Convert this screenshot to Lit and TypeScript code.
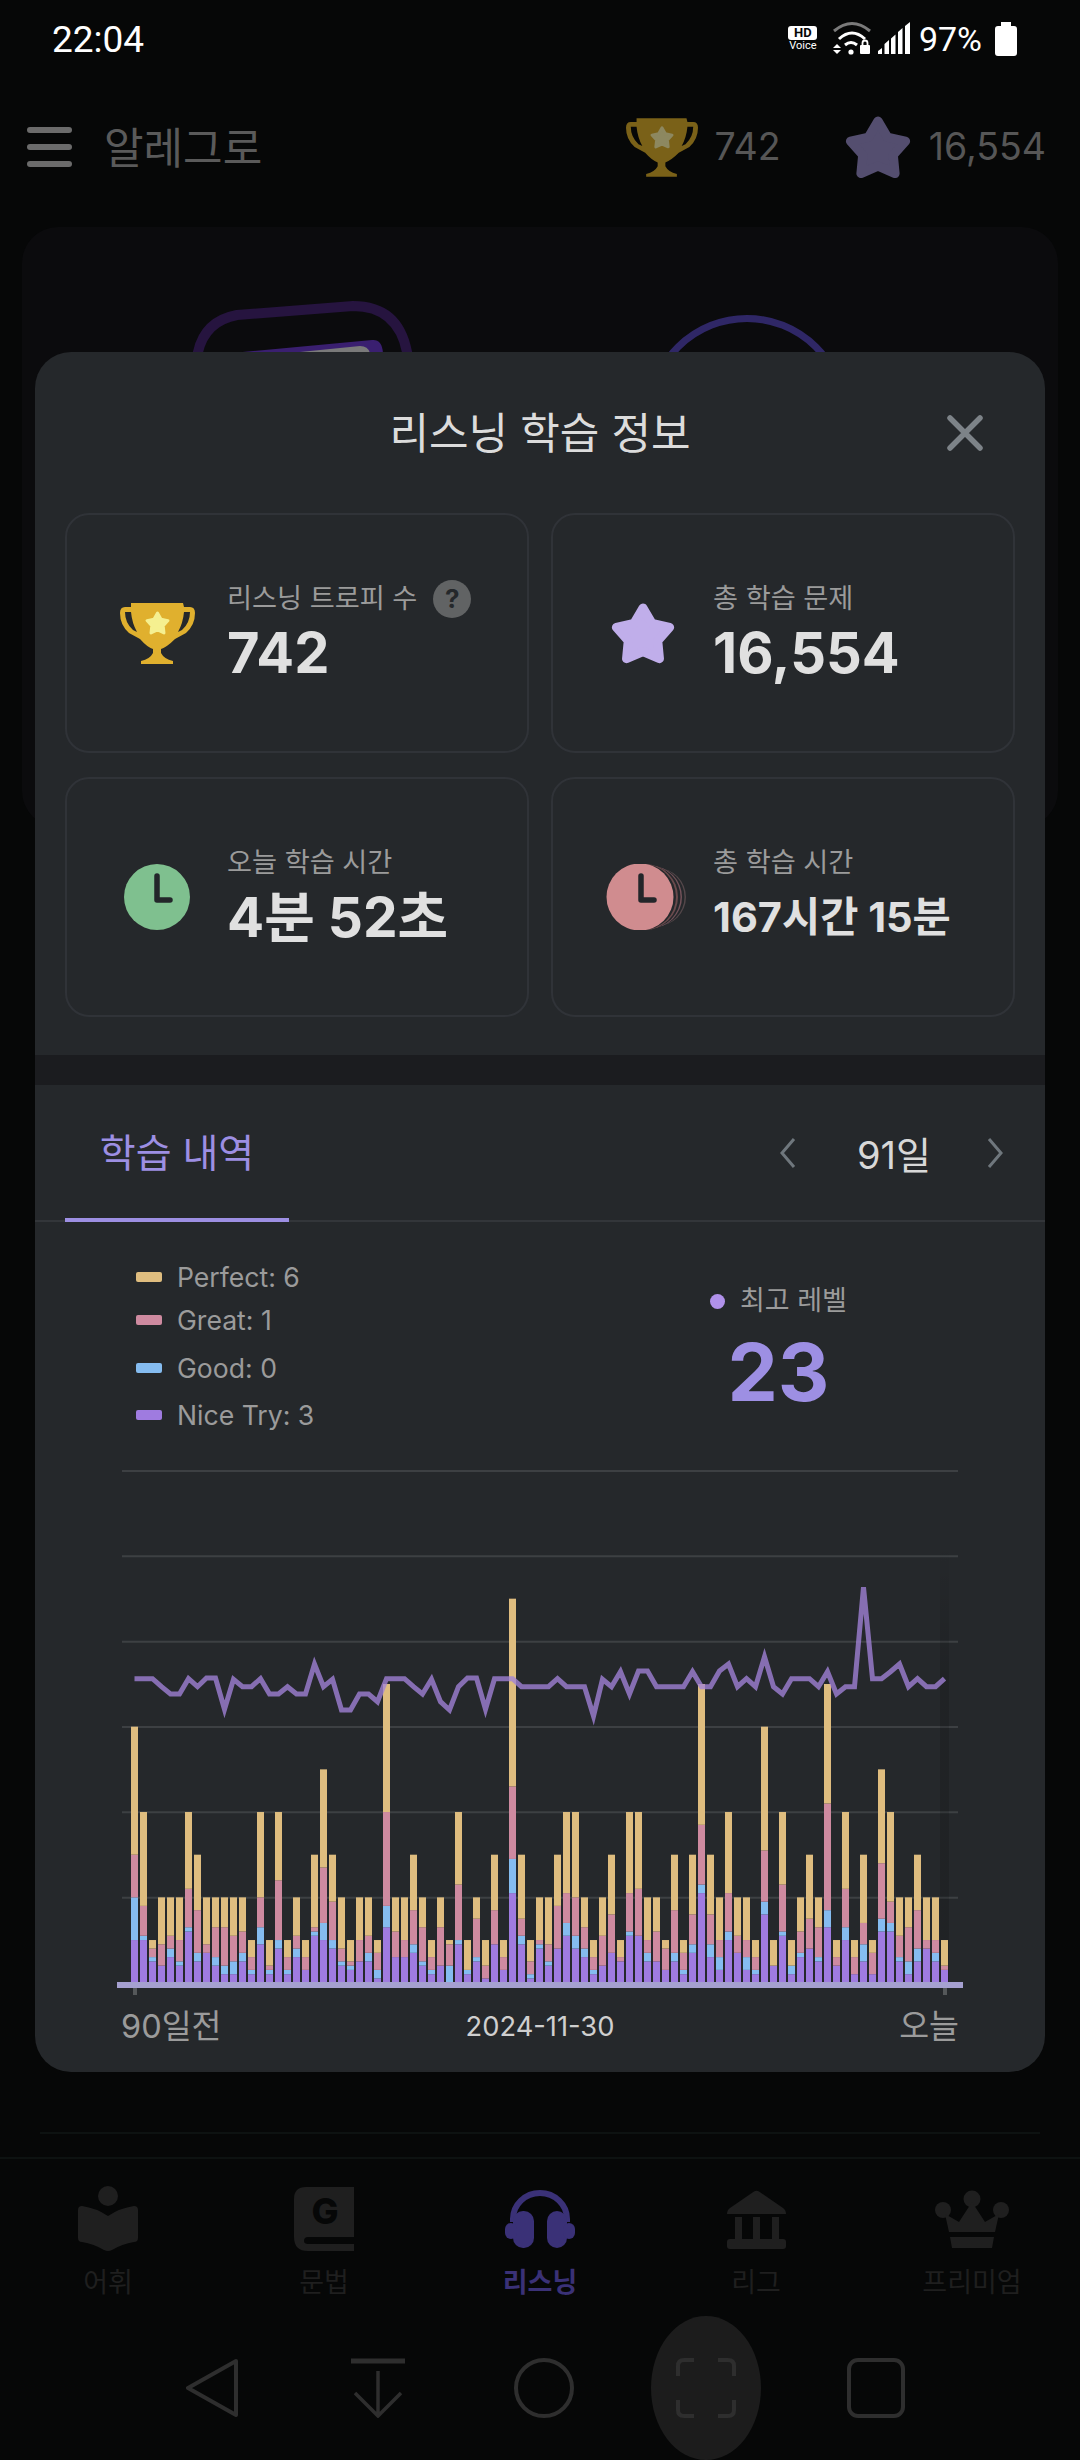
import { LitElement, html, css, svg } from "lit";
import { customElement } from "lit/decorators.js";

// Cumulative question counts per day: nice try, good, great, perfect.
const DAYS: number[][] = [
  [10,20,30,60],[10,11,18,40],[5,6,8,10],[4,4,9,20],[6,8,11,20],[4,5,10,20],[12,13,22,40],[5,7,17,30],[7,7,9,20],[4,6,13,20],
  [2,4,13,20],[2,5,11,20],[5,7,12,20],[2,3,6,10],[9,13,20,40],[2,3,4,10],[8,10,24,40],[2,3,6,10],[6,8,11,20],[3,3,6,10],
  [11,12,13,30],[10,14,27,50],[8,10,19,30],[4,5,8,20],[3,4,5,10],[5,5,10,20],[5,7,11,20],[1,3,7,10],[13,18,40,70],[6,6,12,20],
  [6,6,10,20],[7,9,17,30],[4,5,13,20],[2,3,6,10],[4,4,13,20],[0,4,9,10],[9,10,23,40],[2,3,3,10],[5,6,15,20],[1,1,4,10],
  [9,9,17,30],[3,3,6,10],[21,29,46,90],[9,11,15,30],[1,2,5,10],[8,9,10,20],[4,5,9,20],[8,8,18,30],[11,14,21,40],[8,11,20,40],
  [6,8,13,20],[2,3,6,10],[4,4,11,20],[7,7,16,30],[5,5,6,10],[11,12,21,40],[11,11,22,40],[5,7,10,20],[5,5,12,20],[3,3,8,10],
  [5,7,17,30],[2,3,7,10],[7,9,16,30],[21,23,37,70],[6,9,16,30],[3,6,10,20],[10,12,21,40],[7,7,11,20],[3,6,10,20],[2,3,6,10],
  [16,19,31,60],[4,4,4,10],[11,12,23,40],[2,4,4,10],[6,7,12,20],[8,8,15,30],[5,6,13,20],[13,17,42,70],[4,4,6,10],[10,13,22,40],
  [2,2,6,10],[5,9,14,30],[2,2,7,10],[12,15,28,50],[12,14,19,40],[5,6,11,20],[2,5,13,20],[5,8,17,30],[8,8,10,20],[5,7,10,20],[3,3,4,10],
];

// Daily top level, stored as the y offset of each point from the top of the plot window.
const LEVELS: number[] = [
  356,356,356,380,402,402,356,380,354,354,448,358,380,380,356,402,402,380,402,402,312,380,358,450,450,402,402,425,356,356,
  356,380,402,358,425,450,380,354,354,448,356,356,356,380,380,380,380,356,380,380,380,468,358,380,335,402,333,333,380,380,
  380,380,335,380,380,333,312,380,356,380,290,380,402,356,356,356,380,335,402,380,380,82,356,356,335,312,380,356,380,380,356,
];

const SERIES = ["#9f7be0", "#85bcf0", "#ce8aa0", "#dfbd7f"];
const BASE = 1982.7;
const UNIT = 4.267;
const GRID = [1471, 1556.3, 1641.7, 1727, 1812.3, 1897.7];

function starPoints(cx: number, cy: number, R: number, r: number): string {
  const pts: string[] = [];
  for (let i = 0; i < 10; i++) {
    const rad = i % 2 === 0 ? R : r;
    const a = -Math.PI / 2 + (i * Math.PI) / 5;
    pts.push(`${(cx + rad * Math.cos(a)).toFixed(2)},${(cy + rad * Math.sin(a)).toFixed(2)}`);
  }
  return pts.join(" ");
}

const trophy = (cup: string, star: string) => html`<svg viewBox="0 0 75 61" width="75" height="61">
  <path fill=${cup} fill-rule="evenodd" d="M11 0H63L64 4H70Q75 4 75 10Q75 22 66 30L55 36Q47 44 41 46V50Q44 56 53 58V61H21V58Q30 56 33 50V46Q27 44 20 36L9 30Q0 22 0 10Q0 4 5 4H11ZM5 9Q5 20 13 27L17 29Q12 20 11 9ZM70 9Q70 20 62 27L58 29Q63 20 64 9Z"/>
  <polygon points=${starPoints(37.5, 21, 11, 6)} fill=${star} stroke=${star} stroke-width="3" stroke-linejoin="round"/>
</svg>`;

const roundStar = (fill: string) => html`<svg viewBox="0 0 64 62" width="64" height="62">
  <polygon points=${starPoints(32, 34, 28, 15.5)} fill=${fill} stroke=${fill} stroke-width="9" stroke-linejoin="round"/>
</svg>`;

const clockHands = (cx: number, cy: number) => svg`<path d="M${cx} ${cy - 21}V${cy + 3}H${cx + 13}" fill="none" stroke="#23262a" stroke-width="5.5" stroke-linejoin="round" stroke-linecap="round"/>`;

@customElement("app-root")
export class AppRoot extends LitElement {
  static styles = css`
    :host {
      display: flex;
      flex-direction: column;
      position: relative;
      width: 1080px;
      height: 2460px;
      overflow: hidden;
      background: #060707;
      font-family: Inter, "Noto Sans CJK KR", sans-serif;
      color: #fff;
    }
    svg { display: block; }

    .status { display: flex; align-items: center; height: 78px; padding: 0 63px 0 52px; flex: none; }
    .clock { font: 400 37px Roboto, sans-serif; }
    .status-right { margin-left: auto; display: flex; align-items: center; }
    .hd { width: 30px; margin-right: 15px; display: flex; flex-direction: column; align-items: center; }
    .hd b { display: block; width: 29px; height: 14px; border-radius: 3px; background: #fff; color: #060707; font: 700 13px/14px Roboto, sans-serif; text-align: center; }
    .hd span { font: 400 11px/12px Roboto, sans-serif; }
    .wifi { width: 40px; height: 36px; margin-right: 4px; }
    .signal { width: 34px; height: 36px; margin-right: 8px; }
    .pct { font: 400 34px Roboto, sans-serif; margin-right: 13px; }
    .battery { width: 22px; height: 34px; }

    .top { display: flex; align-items: center; height: 138px; padding: 0 34px 0 27px; flex: none; }
    .burger { display: flex; flex-direction: column; gap: 11px; width: 45px; margin-right: 32px; }
    .burger i { height: 6px; border-radius: 3px; background: #6b6b6b; }
    .brand { font-size: 43px; color: #5a5a5a; margin-bottom: 5px; }
    .top-trophy { width: 72px; height: 59px; margin-left: auto; margin-right: 17px; display: flex; align-items: center; justify-content: center; }
    .top-trophy svg { width: 72px; height: 59px; }
    .top-star { width: 66px; height: 64px; margin-left: 64px; margin-right: 18px; }
    .top-star svg { width: 66px; height: 64px; }
    .count { font-size: 37.5px; color: #565656; margin-bottom: 2px; }

    .back { margin: 11px 22px 0; height: 600px; flex: none; border-radius: 36px; background: #0b0b0d; }

    .foot { margin-top: auto; flex: none; }
    .rule { height: 2px; margin: 0 40px 23px; background: #0d1211; }
    .tabs { display: grid; grid-template-columns: repeat(5, 216px); height: 159px; padding-top: 26px; box-sizing: border-box; border-top: 2px solid #0d1211; }
    .tab { display: flex; flex-direction: column; align-items: center; color: #1f1f1f; font-size: 27px; }
    .tab .ico { height: 68px; margin-bottom: 12px; display: flex; align-items: center; }
    .tab.on { color: #3a3177; font-weight: 700; }
    .tab span { line-height: 36px; }

    .sys { display: flex; align-items: center; height: 144px; padding-left: 186px; }
    .sys svg { flex: none; }
    .pill { width: 110px; height: 144px; border-radius: 55px / 72px; background: #1c1c1c; margin-left: 77px; margin-right: 86px; display: flex; align-items: center; justify-content: center; }

    .modal {
      position: absolute; left: 35px; top: 352px; width: 1010px; height: 1720px;
      border-radius: 36px; background: #25282b; overflow: hidden;
    }
    .head { display: grid; grid-template-columns: 1fr auto 1fr; align-items: center; height: 161px; }
    .head h2 { grid-column: 2; margin: 0 0 6px; font-size: 43px; font-weight: 400; color: #dcdcdc; }
    .close { justify-self: end; margin-right: 62px; width: 36px; height: 36px; }

    .cards { display: grid; grid-template-columns: 464px 464px; grid-auto-rows: 240px; gap: 24px 22px; padding: 0 30px; }
    .card { display: flex; align-items: center; box-sizing: border-box; border: 2px solid #303338; border-radius: 24px; padding-left: 51px; }
    .card .ico { width: 78px; height: 64px; margin-right: 31px; flex: none; display: flex; justify-content: center; align-items: center; }
    .label { display: flex; align-items: center; gap: 16px; font-size: 27.2px; line-height: 40px; color: #9b9b9b; }
    .help { width: 38px; height: 38px; border-radius: 50%; background: #616364; color: #25282b; font: 700 26px/38px Inter, sans-serif; text-align: center; }
    .value { font-size: 56px; font-weight: 700; line-height: 68px; color: #e0e0e0; }
    .value.mid { font-size: 55px; }
    .value.small { font-size: 41.5px; }

    .band { height: 30px; margin-top: 38px; background: #1b1c1f; }
    .hist { display: flex; align-items: stretch; height: 137px; box-sizing: border-box; border-bottom: 2px solid #33363a; }
    .hist-tab { width: 224px; margin-left: 30px; margin-bottom: -2px; box-sizing: border-box; border-bottom: 4px solid #9d8fe3; color: #9d8fe3; font-size: 39px; text-align: center; line-height: 136px; height: 137px; }
    .pager { margin-left: auto; display: flex; align-items: center; margin-right: 41px; }
    .pager span { font-size: 38px; color: #d8d8d8; width: 69px; margin: 0 61px; text-align: center; white-space: nowrap; }
    .pager svg { width: 17px; height: 32px; }

    .summary { display: flex; height: 238px; box-sizing: border-box; padding: 34px 0 0 101px; }
    .legend { display: grid; grid-template-rows: 42px 44px 52px 42px; width: 574px; align-items: center; align-content: start; }
    .legend div { display: flex; align-items: center; font-size: 26.6px; color: #9b9b9b; }
    .legend i { width: 26px; height: 10px; border-radius: 2px; margin-right: 15px; }
    .best { display: flex; flex-direction: column; align-items: center; padding-top: 27px; }
    .best-label { display: flex; align-items: center; gap: 15px; font-size: 27px; line-height: 36px; color: #9b9b9b; }
    .best-label i { width: 15px; height: 15px; border-radius: 50%; background: #b091ea; }
    .best b { font-size: 80px; font-weight: 700; line-height: 88px; margin-top: 9px; color: #9d8fe3; }

    .axis { display: grid; grid-template-columns: 1fr auto 1fr; align-items: center; height: 40px; padding: 0 86px; font-size: 32.5px; color: #9b9b9b; }
    .axis span { margin-bottom: 6px; }
    .axis span:last-child { justify-self: end; }
    .axis em { font-style: normal; font-size: 27.3px; color: #cfcfcf; }
  `;

  private chart() {
    const bars = DAYS.flatMap((d, i) => {
      const x = 131 + 9 * i;
      return d.map((top, k) => {
        const from = k === 0 ? 0 : d[k - 1];
        return svg`<rect x=${x} y=${BASE - top * UNIT} width="7" height=${(top - from) * UNIT} fill=${SERIES[k]}/>`;
      });
    });
    const line = LEVELS.map((z, i) => `${134.5 + 9 * i},${(1560 + z / 3).toFixed(1)}`).join(" ");
    return html`<svg viewBox="35 1460 1010 540" width="1010" height="540">
      <defs>
        <linearGradient id="shade" x1="0" y1="0" x2="0" y2="1">
          <stop offset="0" stop-color="#000" stop-opacity="0"/>
          <stop offset="0.3" stop-color="#000" stop-opacity="0.14"/>
        </linearGradient>
      </defs>
      ${GRID.map((y) => svg`<line x1="122" x2="958" y1=${y} y2=${y} stroke="#3d4043" stroke-width="2"/>`)}
      <rect x="940" y="1540" width="9" height="443" fill="url(#shade)"/>
      ${bars}
      <polyline points=${line} fill="none" stroke="#a283d8" stroke-opacity="0.78" stroke-width="5"/>
      <rect x="133" y="1984" width="4" height="11" fill="#55585a"/>
      <rect x="943" y="1984" width="4" height="11" fill="#55585a"/>
      <rect x="117" y="1982" width="846" height="6" fill="#a5a0d0"/>
    </svg>`;
  }

  render() {
    return html`
      <div class="status">
        <div class="clock">22:04</div>
        <div class="status-right">
          <div class="hd"><b>HD</b><span>Voice</span></div>
          <svg class="wifi" viewBox="835 20 40 36">
            <path d="M836 30Q854 15 872 30" fill="none" stroke="#7a7a7a" stroke-width="3"/>
            <path d="M841 38Q854 26 867 38" fill="none" stroke="#fff" stroke-width="3"/>
            <path d="M847 44Q853 39 859 44" fill="none" stroke="#fff" stroke-width="3"/>
            <circle cx="853" cy="51" r="2.6" fill="#fff"/>
            <path d="M839 43L843 47H835ZM835 49H843L839 53Z" fill="#fff"/>
            <rect x="862" y="44" width="10" height="9" rx="1" fill="#fff"/>
            <path d="M864.5 44V42Q864.5 39.5 867 39.5Q869.5 39.5 869.5 42V44" fill="none" stroke="#fff" stroke-width="1.8"/>
          </svg>
          <svg class="signal" viewBox="879 20 34 36">
            <path d="M880 53V50L884 47V53ZM886.500 53V43L891 39V53ZM893 53V37.500L897.500 33.500V53ZM900 53V31L904.500 27V53ZM907 53V25L912 21V53Z" fill="#fff"/>
          </svg>
          <div class="pct">97%</div>
          <svg class="battery" viewBox="0 0 22 34">
            <path d="M6 0H16V4H19Q22 4 22 7V31Q22 34 19 34H3Q0 34 0 31V7Q0 4 3 4H6Z" fill="#fff"/>
          </svg>
        </div>
      </div>

      <div class="top">
        <div class="burger"><i></i><i></i><i></i></div>
        <div class="brand">알레그로</div>
        <div class="top-trophy">${trophy("#7a6118", "#8d8860")}</div>
        <div class="count">742</div>
        <div class="top-star">${roundStar("#544e6f")}</div>
        <div class="count">16,554</div>
      </div>

      <div class="back">
        <svg viewBox="22 227 1036 140" width="1036" height="140">
          <path d="M198 367V352Q205 321 237 315L353 306Q398 306 407 352V367" fill="none" stroke="#26143f" stroke-width="10"/>
          <path d="M232 353L372 340Q382 339 383 353Z" fill="#3a1f70"/>
          <path d="M290 353L360 346Q368 346 370 353Z" fill="#7a7a7a"/>
          <circle cx="747" cy="416" r="97.500" fill="none" stroke="#2f2766" stroke-width="7"/>
        </svg>
      </div>

      <div class="foot">
        <div class="rule"></div>
        <div class="tabs">
          <div class="tab">
            <div class="ico"><svg width="60" height="66" viewBox="0 0 60 66"><circle cx="30" cy="10" r="10" fill="currentColor"/><path fill="currentColor" d="M0 24Q0 20 4 20Q18 22 30 30Q42 22 56 20Q60 20 60 24V52Q60 56 56 56Q44 58 34 64Q30 66 26 64Q16 58 4 56Q0 56 0 52Z"/></svg></div>
            <span>어휘</span>
          </div>
          <div class="tab">
            <div class="ico"><svg width="60" height="64" viewBox="0 0 60 64"><path fill="currentColor" d="M12 0H60V50H14Q10 50 10 54Q10 57 14 57H60V64H14Q0 64 0 50V12Q0 0 12 0Z"/><text x="31" y="37" text-anchor="middle" font-family="Inter" font-weight="800" font-size="36" fill="#060707">G</text></svg></div>
            <span>문법</span>
          </div>
          <div class="tab on">
            <div class="ico"><svg width="70" height="58" viewBox="0 0 70 58"><path d="M8 32V29a27 26 0 0 1 54 0V32" fill="none" stroke="currentColor" stroke-width="6"/><rect x="8" y="21" width="21" height="37" rx="10" fill="currentColor"/><rect x="42" y="21" width="20" height="37" rx="10" fill="currentColor"/><rect x="0" y="33" width="12" height="16" rx="6" fill="currentColor"/><rect x="58" y="33" width="12" height="16" rx="6" fill="currentColor"/></svg></div>
            <span>리스닝</span>
          </div>
          <div class="tab">
            <div class="ico"><svg width="59" height="59" viewBox="0 0 59 59"><path fill="currentColor" d="M27 1.500Q29.500 0 32 1.500L56 18Q59 20 59 24H0Q0 20 3 18Z"/><rect x="8" y="27" width="7" height="23" fill="currentColor"/><rect x="26" y="27" width="7" height="23" fill="currentColor"/><rect x="45" y="27" width="7" height="23" fill="currentColor"/><rect x="0" y="49" width="59" height="10" rx="3" fill="currentColor"/></svg></div>
            <span>리그</span>
          </div>
          <div class="tab">
            <div class="ico"><svg width="74" height="58" viewBox="0 0 74 58"><circle cx="37" cy="9" r="8.500" fill="currentColor"/><circle cx="8" cy="20" r="8" fill="currentColor"/><circle cx="66" cy="20" r="8" fill="currentColor"/><path fill="currentColor" d="M37 12L50 32L64 24L60 42H14L10 24L24 32ZM15 47H59L57 58H17Z"/></svg></div>
            <span>프리미엄</span>
          </div>
        </div>
        <div class="sys">
          <svg width="52" height="60" viewBox="0 0 52 60"><path d="M50 3L2 30L50 57Z" fill="none" stroke="#2e2e2e" stroke-width="4" stroke-linejoin="round"/></svg>
          <svg style="margin-left:113px" width="54" height="60" viewBox="0 0 54 60"><path d="M0 3H54" stroke="#2e2e2e" stroke-width="5"/><path d="M27 13V58M4 35L27 58L50 35" fill="none" stroke="#2e2e2e" stroke-width="3.500"/></svg>
          <svg style="margin-left:109px" width="60" height="60" viewBox="0 0 60 60"><circle cx="30" cy="30" r="28" fill="none" stroke="#2e2e2e" stroke-width="4"/></svg>
          <div class="pill">
            <svg width="60" height="60" viewBox="0 0 60 60"><path d="M2 18V8Q2 2 8 2H18M42 2H52Q58 2 58 8V18M58 42V52Q58 58 52 58H42M18 58H8Q2 58 2 52V42" fill="none" stroke="#2e2e2e" stroke-width="4"/></svg>
          </div>
          <svg width="58" height="60" viewBox="0 0 58 60"><rect x="2" y="2" width="54" height="56" rx="9" fill="none" stroke="#2e2e2e" stroke-width="4"/></svg>
        </div>
      </div>

      <div class="modal">
        <div class="head">
          <h2>리스닝 학습 정보</h2>
          <svg class="close" viewBox="0 0 36 36"><path d="M3 3L33 33M33 3L3 33" stroke="#7d8388" stroke-width="5.500" stroke-linecap="round"/></svg>
        </div>

        <div class="cards">
          <div class="card">
            <div class="ico">${trophy("#e0b02e", "#f5f090")}</div>
            <div>
              <div class="label">리스닝 트로피 수 <span class="help">?</span></div>
              <div class="value">742</div>
            </div>
          </div>
          <div class="card">
            <div class="ico">${roundStar("#c0aeea")}</div>
            <div>
              <div class="label">총 학습 문제</div>
              <div class="value">16,554</div>
            </div>
          </div>
          <div class="card">
            <div class="ico"><svg width="78" height="66" viewBox="0 0 78 66"><circle cx="39" cy="33" r="33" fill="#7fc08f"/>${clockHands(39, 33)}</svg></div>
            <div>
              <div class="label">오늘 학습 시간</div>
              <div class="value mid">4분 52초</div>
            </div>
          </div>
          <div class="card">
            <div class="ico"><svg style="flex:none" width="88" height="66" viewBox="0 0 88 66">
              <circle cx="58" cy="33" r="29" fill="#54474a"/>
              <circle cx="56" cy="33" r="29.500" fill="#25282b"/>
              <circle cx="52" cy="33" r="31" fill="#74525a"/>
              <circle cx="50" cy="33" r="31.500" fill="#25282b"/>
              <circle cx="46" cy="33" r="33" fill="#6a4a4c"/>
              <circle cx="44" cy="33" r="33" fill="#25282b"/>
              <circle cx="41" cy="33" r="33.500" fill="#d08c8f"/>
              ${clockHands(42, 33)}
            </svg></div>
            <div>
              <div class="label">총 학습 시간</div>
              <div class="value small">167시간 15분</div>
            </div>
          </div>
        </div>

        <div class="band"></div>

        <div class="hist">
          <div class="hist-tab">학습 내역</div>
          <div class="pager">
            <svg viewBox="0 0 17 32"><path d="M15 2L3 16L15 30" fill="none" stroke="#6f777d" stroke-width="3"/></svg>
            <span>91일</span>
            <svg viewBox="0 0 17 32"><path d="M2 2L14 16L2 30" fill="none" stroke="#6f777d" stroke-width="3"/></svg>
          </div>
        </div>

        <div class="summary">
          <div class="legend">
            <div><i style="background:${SERIES[3]}"></i>Perfect: 6</div>
            <div><i style="background:${SERIES[2]}"></i>Great: 1</div>
            <div><i style="background:${SERIES[1]}"></i>Good: 0</div>
            <div><i style="background:${SERIES[0]}"></i>Nice Try: 3</div>
          </div>
          <div class="best">
            <div class="best-label"><i></i>최고 레벨</div>
            <b>23</b>
          </div>
        </div>

        ${this.chart()}

        <div class="axis"><span>90일전</span><em>2024-11-30</em><span>오늘</span></div>
      </div>
    `;
  }
}
